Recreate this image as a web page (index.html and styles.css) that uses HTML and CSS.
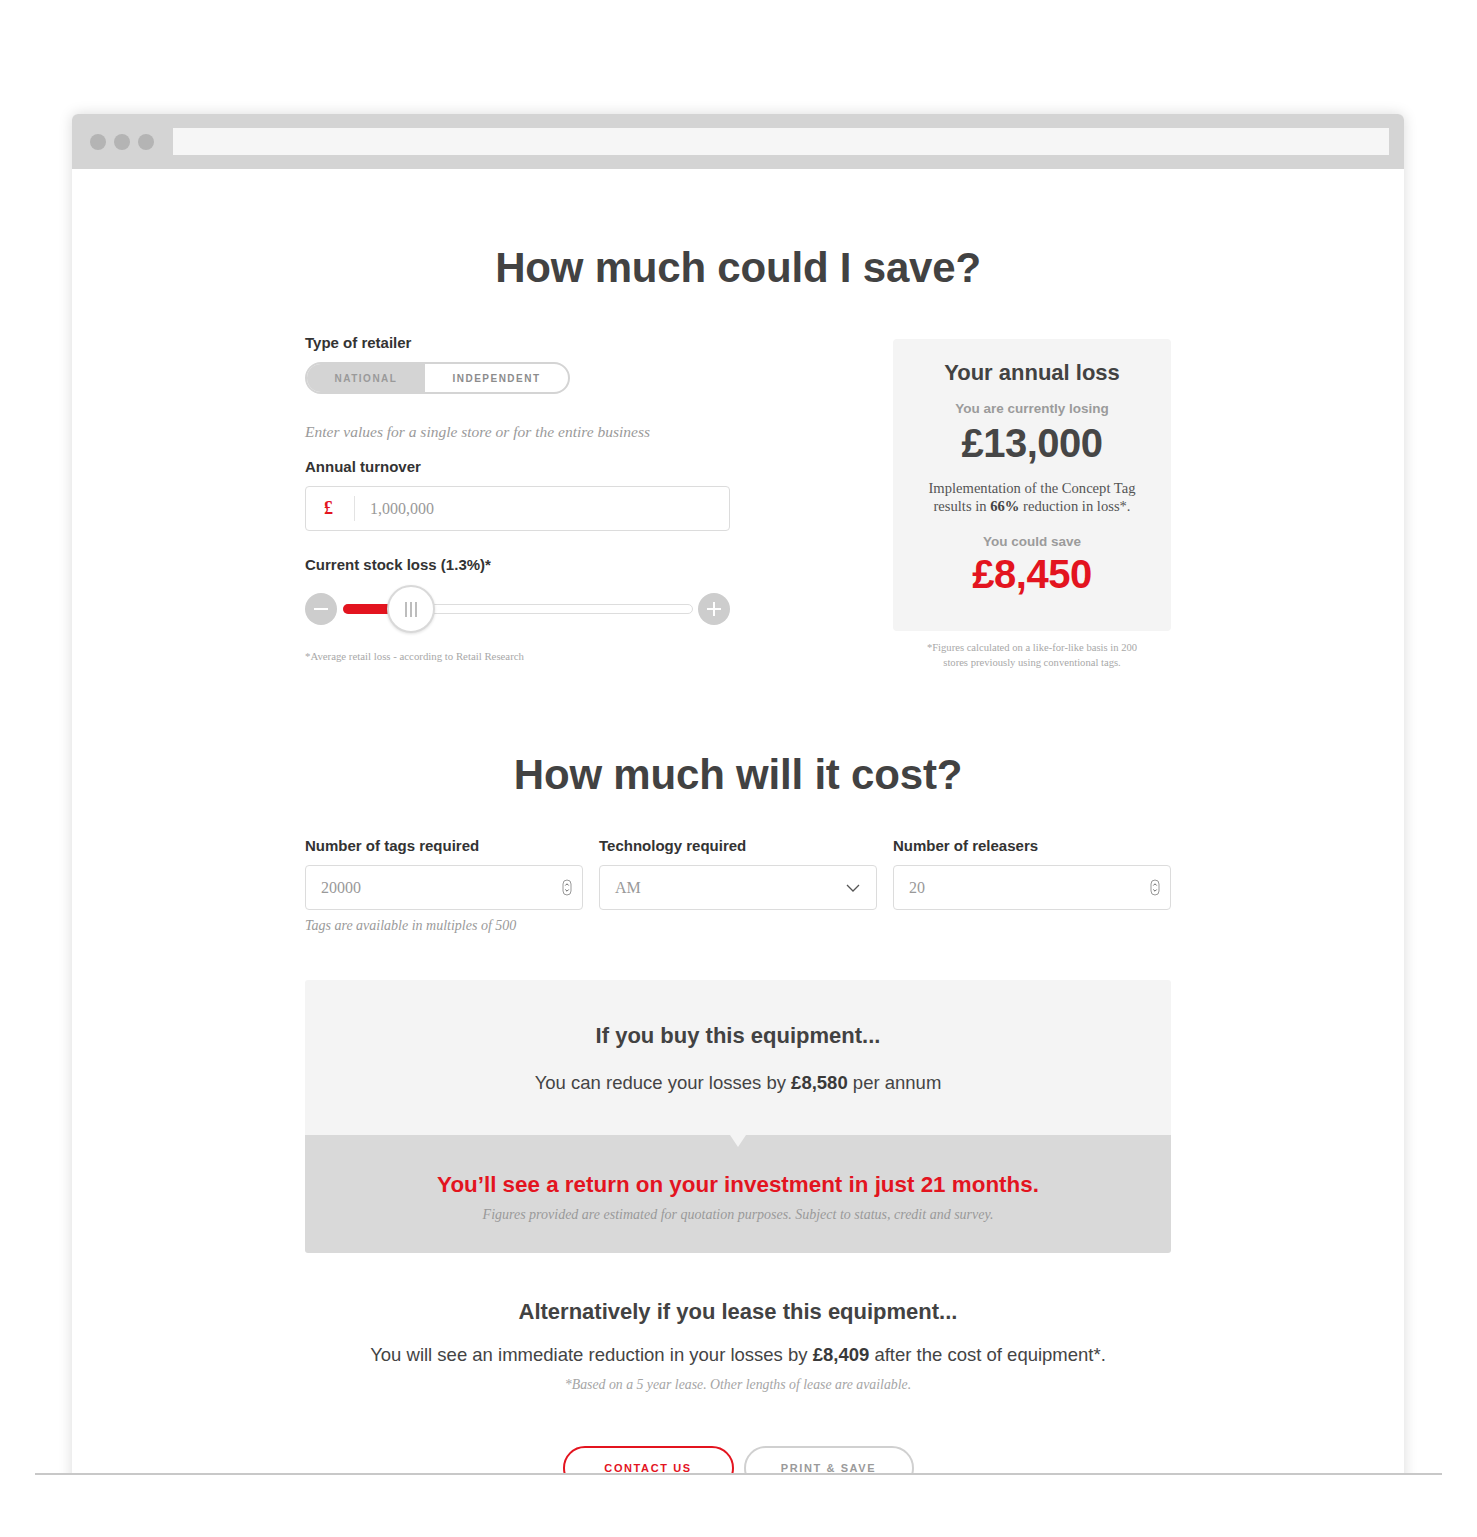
FILE: index.html
```html
<!DOCTYPE html>
<html lang="en">
<head>
<meta charset="utf-8">
<title>How much could I save?</title>
<link rel="stylesheet" href="styles.css">
</head>
<body>
<div class="stage">
  <div class="window">
    <div class="chrome">
      <div class="dots"><span class="dot"></span><span class="dot"></span><span class="dot"></span></div>
      <div class="address"></div>
    </div>
    <main class="page">
      <h1 class="title">How much could I save?</h1>

      <section class="savings">
        <div class="inputs">
          <div class="label">Type of retailer</div>
          <div class="toggle">
            <span class="opt opt-active">NATIONAL</span>
            <span class="opt">INDEPENDENT</span>
          </div>
          <p class="hint">Enter values for a single store or for the entire business</p>

          <div class="label label-turnover">Annual turnover</div>
          <div class="field money">
            <span class="currency">£</span>
            <span class="sep"></span>
            <span class="value">1,000,000</span>
          </div>

          <div class="label label-loss">Current stock loss (1.3%)*</div>
          <div class="slider">
            <span class="circle-btn"><span class="minus"></span></span>
            <div class="track">
              <div class="fill"></div>
              <div class="thumb"><span></span><span></span><span></span></div>
            </div>
            <span class="circle-btn"><span class="minus"></span><span class="vbar"></span></span>
          </div>
          <p class="note">*Average retail loss - according to Retail Research</p>
        </div>

        <aside class="result">
          <div class="card">
            <h2 class="card-title">Your annual loss</h2>
            <div class="card-sub">You are currently losing</div>
            <div class="big">£13,000</div>
            <p class="card-text">Implementation of the Concept Tag<br>results in <b>66%</b> reduction in loss*.</p>
            <div class="card-sub card-sub2">You could save</div>
            <div class="big red">£8,450</div>
          </div>
          <p class="card-note">*Figures calculated on a like-for-like basis in 200<br>stores previously using conventional tags.</p>
        </aside>
      </section>

      <h1 class="title title2">How much will it cost?</h1>

      <section class="cost">
        <div class="col">
          <div class="label">Number of tags required</div>
          <div class="field boxed">
            <span class="value">20000</span>
            <svg class="spin" width="10" height="17" viewBox="0 0 10 17"><rect x="1" y="1" width="8" height="15" rx="4" fill="none" stroke="#999" stroke-width="1"/><path d="M3.3 6.5 L5 4.8 L6.7 6.5 M3.3 10.5 L5 12.2 L6.7 10.5" fill="none" stroke="#666" stroke-width="1"/></svg>
          </div>
          <p class="helper">Tags are available in multiples of 500</p>
        </div>
        <div class="col">
          <div class="label">Technology required</div>
          <div class="field boxed">
            <span class="value">AM</span>
            <svg class="chev" width="14" height="8" viewBox="0 0 14 8"><path d="M1 1 L7 7 L13 1" fill="none" stroke="#555" stroke-width="1.3"/></svg>
          </div>
        </div>
        <div class="col">
          <div class="label">Number of releasers</div>
          <div class="field boxed">
            <span class="value">20</span>
            <svg class="spin" width="10" height="17" viewBox="0 0 10 17"><rect x="1" y="1" width="8" height="15" rx="4" fill="none" stroke="#999" stroke-width="1"/><path d="M3.3 6.5 L5 4.8 L6.7 6.5 M3.3 10.5 L5 12.2 L6.7 10.5" fill="none" stroke="#666" stroke-width="1"/></svg>
          </div>
        </div>
      </section>

      <section class="buy">
        <div class="buy-top">
          <h3 class="sub-title">If you buy this equipment...</h3>
          <p class="lead">You can reduce your losses by <b>£8,580</b> per annum</p>
        </div>
        <div class="buy-bottom">
          <h3 class="roi">You’ll see a return on your investment in just 21 months.</h3>
          <p class="small-italic">Figures provided are estimated for quotation purposes. Subject to status, credit and survey.</p>
        </div>
      </section>

      <section class="lease">
        <h3 class="sub-title">Alternatively if you lease this equipment...</h3>
        <p class="lead lease-lead">You will see an immediate reduction in your losses by <b>£8,409</b> after the cost of equipment*.</p>
        <p class="small-italic lease-note">*Based on a 5 year lease. Other lengths of lease are available.</p>
      </section>

      <div class="actions">
        <a class="btn btn-red">CONTACT US</a>
        <a class="btn btn-grey">PRINT &amp; SAVE</a>
      </div>
    </main>
  </div>
</div>
<div class="baseline"></div>
</body>
</html>
```

FILE: styles.css
```css
* { box-sizing: border-box; margin: 0; padding: 0; }
body {
  background: #fff;
  font-family: "Liberation Sans", Arial, sans-serif;
  color: #444;
}

.stage {
  height: 1473px;
  overflow: hidden;
  padding-top: 114px;
}
.window {
  width: 1332px;
  margin-left: 72px;
  min-height: 1420px;
  background: #fff;
  border-radius: 6px 6px 0 0;
  box-shadow: 0 0 14px rgba(0, 0, 0, 0.15);
}
.chrome {
  height: 55px;
  background: #d4d4d4;
  border-radius: 6px 6px 0 0;
  display: flex;
  align-items: center;
  padding: 0 15px 0 18px;
}
.dots { display: flex; gap: 8px; margin-right: 19px; }
.dot { width: 16px; height: 16px; border-radius: 50%; background: #b4b4b4; }
.address { flex: 1; height: 27px; background: #f6f6f6; }

.baseline {
  width: 1407px;
  height: 2px;
  margin-left: 35px;
  background: #c8c8c8;
}

.page {
  width: 866px;
  margin: 0 auto;
  padding-top: 74px;
}
.title {
  font-size: 42px;
  line-height: 50px;
  font-weight: bold;
  text-align: center;
  color: #424242;
  letter-spacing: -0.2px;
}
.title2 { margin-top: 80px; }

.savings {
  display: flex;
  justify-content: space-between;
  margin-top: 40px;
}
.inputs { width: 425px; }
.label {
  font-size: 15px;
  line-height: 20px;
  font-weight: bold;
  color: #333;
}
.toggle {
  margin-top: 9px;
  width: 265px;
  height: 32px;
  display: flex;
  border: 2px solid #d4d4d4;
  border-radius: 16px;
  overflow: hidden;
}
.opt {
  display: flex;
  align-items: center;
  justify-content: center;
  font-size: 10px;
  font-weight: bold;
  letter-spacing: 1.5px;
  color: #8c8c8c;
  flex: 1;
}
.opt-active {
  flex: 0 0 118px;
  background: #d4d4d4;
  color: #9a9a9a;
}
.hint {
  margin-top: 28px;
  font-family: "Liberation Serif", "Times New Roman", serif;
  font-style: italic;
  font-size: 15.5px;
  line-height: 20px;
  color: #9a9a9a;
}
.label-turnover { margin-top: 15px; }
.field {
  height: 45px;
  border: 1px solid #dcdcdc;
  border-radius: 4px;
  display: flex;
  align-items: center;
  font-family: "Liberation Serif", "Times New Roman", serif;
  font-size: 16px;
  color: #999;
  background: #fff;
}
.money { margin-top: 9px; padding-left: 18px; }
.currency {
  color: #e3141f;
  font-weight: bold;
  font-size: 18px;
  width: 30px;
}
.sep { width: 1px; height: 25px; background: #e3e3e3; margin-right: 15px; }
.label-loss { margin-top: 24px; }

.slider {
  margin-top: 10px;
  height: 48px;
  display: flex;
  align-items: center;
}
.circle-btn {
  position: relative;
  width: 32px;
  height: 32px;
  border-radius: 50%;
  background: #cdcdcd;
  flex: none;
}
.minus {
  position: absolute;
  left: 9px;
  top: 15px;
  width: 14px;
  height: 2px;
  background: #fff;
}
.vbar {
  position: absolute;
  left: 15px;
  top: 9px;
  width: 2px;
  height: 14px;
  background: #fff;
}
.track {
  position: relative;
  flex: 1;
  height: 10px;
  margin: 0 5px 0 6px;
  border: 1px solid #dddddd;
  border-radius: 5px;
  background: #fff;
}
.fill {
  position: absolute;
  left: -1px;
  top: -1px;
  width: 56px;
  height: 10px;
  border-radius: 5px 0 0 5px;
  background: #e3141f;
}
.thumb {
  position: absolute;
  left: 43px;
  top: -20px;
  width: 48px;
  height: 48px;
  border-radius: 50%;
  background: #fff;
  border: 2px solid #d9d9d9;
  box-shadow: 0 1px 3px rgba(0, 0, 0, 0.12);
  display: flex;
  align-items: center;
  justify-content: center;
  gap: 3px;
}
.thumb span { width: 2px; height: 15px; background: #bdbdbd; }
.note {
  margin-top: 16px;
  font-family: "Liberation Serif", "Times New Roman", serif;
  font-size: 10.8px;
  line-height: 14px;
  color: #a8a8a8;
}

.result { width: 278px; margin-top: 6px; }
.card {
  background: #f4f4f4;
  border-radius: 4px;
  text-align: center;
  padding: 20px 10px 35px;
}
.card-title {
  font-size: 22px;
  line-height: 28px;
  font-weight: bold;
  color: #424242;
}
.card-sub {
  margin-top: 13px;
  font-size: 13.5px;
  line-height: 18px;
  font-weight: bold;
  color: #9b9b9b;
}
.big {
  margin-top: 3px;
  font-size: 40px;
  line-height: 44px;
  font-weight: bold;
  color: #464646;
  letter-spacing: -0.5px;
}
.red { color: #e3141f; margin-top: 1px; }
.card-text {
  margin-top: 14px;
  font-family: "Liberation Serif", "Times New Roman", serif;
  font-size: 14.6px;
  line-height: 18px;
  color: #555;
}
.card-text b { color: #444; }
.card-sub2 { margin-top: 18px; }
.card-note {
  margin-top: 9px;
  text-align: center;
  font-family: "Liberation Serif", "Times New Roman", serif;
  font-size: 10.6px;
  line-height: 15px;
  color: #a8a8a8;
}

.cost {
  margin-top: 36px;
  display: grid;
  grid-template-columns: repeat(3, 1fr);
  gap: 16px;
}
.boxed {
  margin-top: 9px;
  padding: 0 10px 0 15px;
  justify-content: space-between;
}
.chev { margin-right: 6px; }
.helper {
  margin-top: 7px;
  font-family: "Liberation Serif", "Times New Roman", serif;
  font-style: italic;
  font-size: 14px;
  line-height: 18px;
  color: #9a9a9a;
}

.buy {
  margin-top: 45px;
  border-radius: 3px;
  overflow: hidden;
  text-align: center;
}
.buy-top {
  position: relative;
  background: #f4f4f4;
  padding: 42px 0 40px;
}
.buy-top::after {
  content: "";
  position: absolute;
  left: 50%;
  bottom: -12px;
  margin-left: -8px;
  border-left: 8px solid transparent;
  border-right: 8px solid transparent;
  border-top: 12px solid #f4f4f4;
}
.sub-title {
  font-size: 22px;
  line-height: 28px;
  font-weight: bold;
  color: #424242;
}
.lead {
  margin-top: 21px;
  font-size: 18.5px;
  line-height: 24px;
  color: #444;
}
.lead b { color: #3a3a3a; }
.buy-bottom {
  background: #d9d9d9;
  padding: 36px 0 29px;
}
.roi {
  font-size: 22.4px;
  line-height: 28px;
  font-weight: bold;
  color: #e3141f;
}
.small-italic {
  margin-top: 7px;
  font-family: "Liberation Serif", "Times New Roman", serif;
  font-style: italic;
  font-size: 14px;
  line-height: 18px;
  color: #999;
}

.lease { margin-top: 45px; text-align: center; }
.lease-lead { margin-top: 17px; }
.lease-note { margin-top: 9px; font-size: 13.8px; color: #a5a5a5; }

.actions {
  margin-top: 52px;
  display: flex;
  justify-content: center;
  gap: 10px;
}
.btn {
  width: 171px;
  height: 44px;
  border-radius: 22px;
  display: flex;
  align-items: center;
  justify-content: center;
  font-size: 11px;
  font-weight: bold;
  letter-spacing: 1.6px;
  text-decoration: none;
}
.btn-red { border: 2px solid #e3141f; color: #e3141f; }
.btn-grey { width: 170px; border: 2px solid #d0d0d0; color: #9a9a9a; }
```
